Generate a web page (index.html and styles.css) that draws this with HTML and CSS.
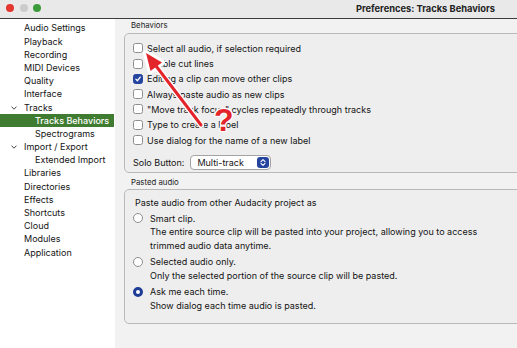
FILE: index.html
```html
<!DOCTYPE html>
<html>
<head>
<meta charset="utf-8">
<link rel="stylesheet" href="styles.css">
</head>
<body>
<div class="window">
  <div class="titlebar">
    <div class="lights">
      <span class="light red"></span>
      <span class="light gray"></span>
      <span class="light green"></span>
    </div>
    <div class="title">Preferences: Tracks Behaviors</div>
  </div>
  <div class="content">
    <nav class="sidebar">
      <div class="item">Audio Settings</div>
      <div class="item">Playback</div>
      <div class="item">Recording</div>
      <div class="item">MIDI Devices</div>
      <div class="item">Quality</div>
      <div class="item">Interface</div>
      <div class="item parent"><svg class="chev" viewBox="0 0 6 4"><path d="M0.5 0.6 L3 3.2 L5.5 0.6" fill="none" stroke="#333" stroke-width="0.9"/></svg>Tracks</div>
      <div class="item sub selected">Tracks Behaviors</div>
      <div class="item sub">Spectrograms</div>
      <div class="item parent"><svg class="chev" viewBox="0 0 6 4"><path d="M0.5 0.6 L3 3.2 L5.5 0.6" fill="none" stroke="#333" stroke-width="0.9"/></svg>Import / Export</div>
      <div class="item sub">Extended Import</div>
      <div class="item">Libraries</div>
      <div class="item">Directories</div>
      <div class="item">Effects</div>
      <div class="item">Shortcuts</div>
      <div class="item">Cloud</div>
      <div class="item">Modules</div>
      <div class="item">Application</div>
    </nav>
    <main class="main">
      <div class="group-label">Behaviors</div>
      <div class="group behaviors">
        <div class="row"><span class="cb"></span>Select all audio, if selection required</div>
        <div class="row"><span class="cb"></span>Enable cut lines</div>
        <div class="row"><span class="cb checked"><svg viewBox="0 0 10 10"><path d="M2.3 5.2 L4.2 7.2 L7.8 2.6" fill="none" stroke="#fff" stroke-width="1.6" stroke-linecap="round" stroke-linejoin="round"/></svg></span>Editing a clip can move other clips</div>
        <div class="row"><span class="cb"></span>Always paste audio as new clips</div>
        <div class="row"><span class="cb"></span>"Move track focus" cycles repeatedly through tracks</div>
        <div class="row"><span class="cb"></span>Type to create a label</div>
        <div class="row"><span class="cb"></span>Use dialog for the name of a new label</div>
        <div class="solo">
          <span class="solo-label">Solo Button:</span>
          <div class="select">
            <span class="select-text">Multi-track</span>
            <span class="stepper"><svg viewBox="0 0 12 12"><path d="M3.8 5 L6 2.9 L8.2 5 M3.8 7 L6 9.1 L8.2 7" fill="none" stroke="#fff" stroke-width="1.2" stroke-linecap="round" stroke-linejoin="round"/></svg></span>
          </div>
        </div>
      </div>
      <div class="group-label second">Pasted audio</div>
      <div class="group pasted">
        <div class="intro">Paste audio from other Audacity project as</div>
        <div class="option">
          <div class="opt-title"><span class="radio"></span>Smart clip.</div>
          <div class="desc">The entire source clip will be pasted into your project, allowing you to access<br>trimmed audio data anytime.</div>
        </div>
        <div class="option">
          <div class="opt-title"><span class="radio"></span>Selected audio only.</div>
          <div class="desc">Only the selected portion of the source clip will be pasted.</div>
        </div>
        <div class="option last">
          <div class="opt-title"><span class="radio on"></span>Ask me each time.</div>
          <div class="desc">Show dialog each time audio is pasted.</div>
        </div>
      </div>
    </main>
  </div>
  <svg class="annotation" width="517" height="348" viewBox="0 0 517 348">
    <g stroke="#fff" stroke-width="6" stroke-linecap="round" stroke-linejoin="round" fill="#fff">
      <line x1="201" y1="125" x2="153" y2="62"/>
      <polygon points="146,53 162,62.5 150.5,71"/>
    </g>
    <g fill="#e3242b">
      <line x1="201" y1="125" x2="153" y2="62" stroke="#e3242b" stroke-width="3" stroke-linecap="round"/>
      <polygon points="146,53 162,62.5 150.5,71"/>
    </g>
  </svg>
  <span class="qmark">?</span>
</div>
</body>
</html>
```

FILE: styles.css
```css
* { box-sizing: border-box; }
html, body { margin: 0; padding: 0; }
body {
  font-family: Inter, "Liberation Sans", sans-serif;
  font-size: 9px;
  color: #141414;
  background: #f2f2f2;
}
.window {
  position: relative;
  width: 517px;
  height: 348px;
  overflow: hidden;
  display: flex;
  flex-direction: column;
}
.titlebar {
  height: 19px;
  flex: none;
  background: #e9e9e9;
  border-bottom: 1px solid #3c3c3c;
  display: flex;
  align-items: center;
  justify-content: space-between;
  padding: 0 22px 0 6px;
}
.lights { display: flex; gap: 5.5px; margin-top: -2px; }
.light { width: 8px; height: 8px; border-radius: 50%; display: block; }
.light.red { background: #e4372f; }
.light.gray { background: #cbcbcb; }
.light.green { background: #3c9c3b; }
.title {
  font-weight: 700;
  font-size: 9.3px;
  color: #222;
  margin-top: -1px;
}
.content {
  flex: 1;
  display: flex;
  min-height: 0;
}
.sidebar {
  width: 115px;
  flex: none;
  background: #ffffff;
  padding-top: 2.4px;
}
.item {
  height: 13.2px;
  line-height: 13.2px;
  padding-left: 24px;
  white-space: nowrap;
  position: relative;
  color: #141414;
}
.item.sub { padding-left: 35px; }
.item.selected {
  background: #3f7c31;
  color: #fff;
  font-weight: 500;
  margin-right: 1px;
}
.chev {
  position: absolute;
  left: 11px;
  top: 5px;
  width: 6px;
  height: 4px;
}
.main {
  flex: 1;
  background: #f2f2f2;
  padding-left: 9px;
  margin-right: -12px;
}
.group-label {
  font-size: 7.8px;
  height: 12px;
  line-height: 12px;
  padding-left: 7px;
  margin-bottom: 2px;
  color: #222;
}
.group-label.second { margin-top: 3.5px; margin-bottom: 1px; }
.group {
  border: 1px solid #b9b9b9;
  border-radius: 5px;
  background: #eeeeee;
  padding-left: 8px;
}
.behaviors {
  padding-top: 6.6px;
  padding-bottom: 2px;
}
.row {
  height: 15.3px;
  display: flex;
  align-items: center;
  gap: 4px;
  white-space: nowrap;
}
.cb {
  width: 10px;
  height: 10px;
  border: 1px solid #8e8e8e;
  border-radius: 2.5px;
  background: #fff;
  flex: none;
  display: flex;
}
.cb svg { width: 100%; height: 100%; }
.cb.checked {
  background: #24449f;
  border-color: #24449f;
}
.solo {
  margin-top: 7px;
  height: 15px;
  display: flex;
  align-items: center;
  gap: 6px;
}
.select {
  width: 81px;
  height: 15px;
  border: 1px solid #a3a3a3;
  border-radius: 4px;
  background: #fff;
  display: flex;
  align-items: center;
  justify-content: space-between;
  padding: 0 1px 0 6px;
}
.stepper {
  width: 12px;
  height: 11px;
  border-radius: 3px;
  background: #24449f;
  display: flex;
}
.stepper svg { width: 12px; height: 11px; }
.pasted {
  padding-top: 6px;
  padding-bottom: 11px;
}
.intro {
  height: 13.5px;
  line-height: 13.5px;
  padding-left: 2px;
  margin-bottom: 2px;
}
.option { margin-bottom: 3px; }
.option.last { margin-top: 3px; margin-bottom: 0; }
.opt-title {
  height: 13.5px;
  display: flex;
  align-items: center;
  gap: 7px;
}
.desc {
  padding-left: 17px;
  line-height: 13.5px;
}
.radio {
  width: 10px;
  height: 10px;
  border-radius: 50%;
  border: 1px solid #8e8e8e;
  background: #fff;
  flex: none;
}
.radio.on {
  border: 3px solid #1f3c96;
  background: #fff;
}
.annotation {
  position: absolute;
  left: 0;
  top: 0;
  pointer-events: none;
}
.qmark {
  position: absolute;
  left: 214px;
  top: 102px;
  font-family: "Liberation Sans", Arial, sans-serif;
  font-weight: 700;
  font-size: 32px;
  line-height: 36px;
  color: #e3242b;
  text-shadow: -1px 0 #fff, 1px 0 #fff, 0 -1px #fff, 0 1px #fff, -1px -1px #fff, 1px 1px #fff, -1px 1px #fff, 1px -1px #fff;
}
```
